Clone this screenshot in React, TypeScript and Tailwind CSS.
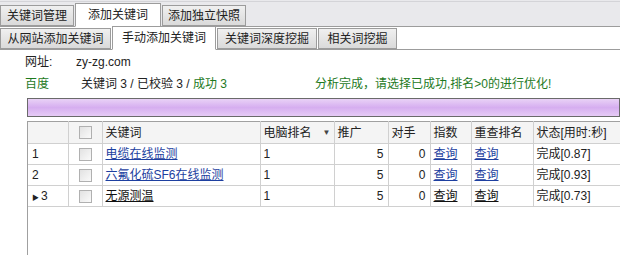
import React from 'react'

interface Row {
  id: number
  keyword: string
  rank: string
  promo: number
  rivals: number
  time: string
  current?: boolean
}

const rows: Row[] = [
  { id: 1, keyword: '电缆在线监测', rank: '1', promo: 5, rivals: 0, time: '完成[0.87]' },
  { id: 2, keyword: '六氟化硫SF6在线监测', rank: '1', promo: 5, rivals: 0, time: '完成[0.93]' },
  { id: 3, keyword: '无源测温', rank: '1', promo: 5, rivals: 0, time: '完成[0.73]', current: true },
]

const font = 'font-["Liberation_Sans","Noto_Sans_CJK_SC",sans-serif]'

function Tab({ label, active, w }: { label: string; active?: boolean; w: string }) {
  return (
    <div
      className={`${w} flex items-center justify-center border border-[#9c9c9c] text-[12px] text-[#222] ${
        active
          ? 'h-[24px] bg-white border-b-white relative z-10 -mb-px'
          : 'h-[21px] bg-gradient-to-b from-[#f0f0f0] to-[#dadada]'
      }`}
    >
      {label}
    </div>
  )
}

function Check() {
  return (
    <div className="w-[13px] h-[13px] border border-[#b0b0b0] bg-gradient-to-br from-[#e2e2e2] to-[#fafafa] mx-auto" />
  )
}

export default function App() {
  return (
    <div className={`w-[620px] h-[255px] overflow-hidden bg-white ${font} text-[12px] text-[#222]`}>
      {/* Top tabs */}
      <div className="h-[27px] bg-[#e9e9ec] flex flex-col border-b border-b-[#9c9c9c]">
        <div className="h-[2px] border-b border-b-[#d4d4d8]" />
        <div className="flex-1 flex items-end gap-[1px]">
          <Tab label="关键词管理" w="w-[74px]" />
          <Tab label="添加关键词" w="w-[86px]" active />
          <Tab label="添加独立快照" w="w-[84px]" />
        </div>
      </div>
      {/* Sub tabs */}
      <div className="h-[23px] flex items-end gap-[1px] border-b border-b-[#9c9c9c]">
        <Tab label="从网站添加关键词" w="w-[111px]" />
        <Tab label="手动添加关键词" w="w-[104px]" active />
        <Tab label="关键词深度挖掘" w="w-[100px]" />
        <Tab label="相关词挖掘" w="w-[79px]" />
      </div>

      {/* Info */}
      <div className="pl-[25px] pt-[2px]">
        <div className="flex h-[20px] items-center">
          <span className="w-[51px]">网址:</span>
          <span>zy-zg.com</span>
        </div>
        <div className="flex h-[24px] items-center">
          <span className="w-[56px] text-[#1e7a1e]">百度</span>
          <span className="w-[234px]">
            关键词 3 / 已校验 3 / <span className="text-[#1e7a1e]">成功 3</span>
          </span>
          <span className="text-[#1e7a1e]">分析完成，请选择已成功,排名&gt;0的进行优化!</span>
        </div>
      </div>

      {/* Progress bar */}
      <div className="ml-[27px] mt-[2px] h-[19px] border border-[#6a6a6a] bg-gradient-to-b from-[#e9d2f6] via-[#d6aef0] to-[#e6cbf5]" />

      {/* Grid */}
      <div className="ml-[27px] mt-[4px] h-[200px] overflow-hidden border-l border-l-[#a0a0a0]">
        <table className="border-collapse table-fixed w-[640px]">
          <colgroup>
            <col className="w-[40px]" />
            <col className="w-[34px]" />
            <col className="w-[158px]" />
            <col className="w-[74px]" />
            <col className="w-[54px]" />
            <col className="w-[42px]" />
            <col className="w-[41px]" />
            <col className="w-[62px]" />
            <col className="w-[135px]" />
          </colgroup>
          <thead>
            <tr className="h-[22px] bg-[#f4f4f4] border-t border-t-[#a0a0a0]">
              <th className="border-r border-b border-[#d0d0d0]" />
              <th className="border-r border-b border-[#d0d0d0]">
                <Check />
              </th>
              <th className="border-r border-b border-[#d0d0d0] text-left font-normal pl-[3px]">关键词</th>
              <th className="border-r border-b border-[#d0d0d0] text-left font-normal pl-[3px]">
                <div className="flex items-center justify-between pr-[3px]">
                  <span>电脑排名</span>
                  <span className="text-[8px] text-[#444]">▼</span>
                </div>
              </th>
              <th className="border-r border-b border-[#d0d0d0] text-left font-normal pl-[3px]">推广</th>
              <th className="border-r border-b border-[#d0d0d0] text-left font-normal pl-[3px]">对手</th>
              <th className="border-r border-b border-[#d0d0d0] text-left font-normal pl-[3px]">指数</th>
              <th className="border-r border-b border-[#d0d0d0] text-left font-normal pl-[3px]">重查排名</th>
              <th className="border-b border-[#d0d0d0] text-left font-normal pl-[3px] whitespace-nowrap">状态[用时:秒]</th>
            </tr>
          </thead>
          <tbody>
            {rows.map((r) => {
              const link = r.current ? 'text-[#111] underline' : 'text-[#1d3fa0] underline'
              return (
                <tr key={r.id} className="h-[21px]">
                  <td className="border-r border-b border-[#d0d0d0] pl-[4px]">
                    {r.current ? <span className="text-[7px] mr-[2px]">▶</span> : null}
                    {r.id}
                  </td>
                  <td className="border-r border-b border-[#d0d0d0]">
                    <Check />
                  </td>
                  <td className="border-r border-b border-[#d0d0d0] pl-[3px]">
                    <span className={link}>{r.keyword}</span>
                  </td>
                  <td className="border-r border-b border-[#d0d0d0] pl-[3px]">{r.rank}</td>
                  <td className="border-r border-b border-[#d0d0d0] text-right pr-[4px]">{r.promo}</td>
                  <td className="border-r border-b border-[#d0d0d0] text-right pr-[4px]">{r.rivals}</td>
                  <td className="border-r border-b border-[#d0d0d0] pl-[3px]">
                    <span className={link}>查询</span>
                  </td>
                  <td className="border-r border-b border-[#d0d0d0] pl-[3px]">
                    <span className={link}>查询</span>
                  </td>
                  <td className="border-b border-[#d0d0d0] pl-[3px]">{r.time}</td>
                </tr>
              )
            })}
          </tbody>
        </table>
      </div>
    </div>
  )
}
